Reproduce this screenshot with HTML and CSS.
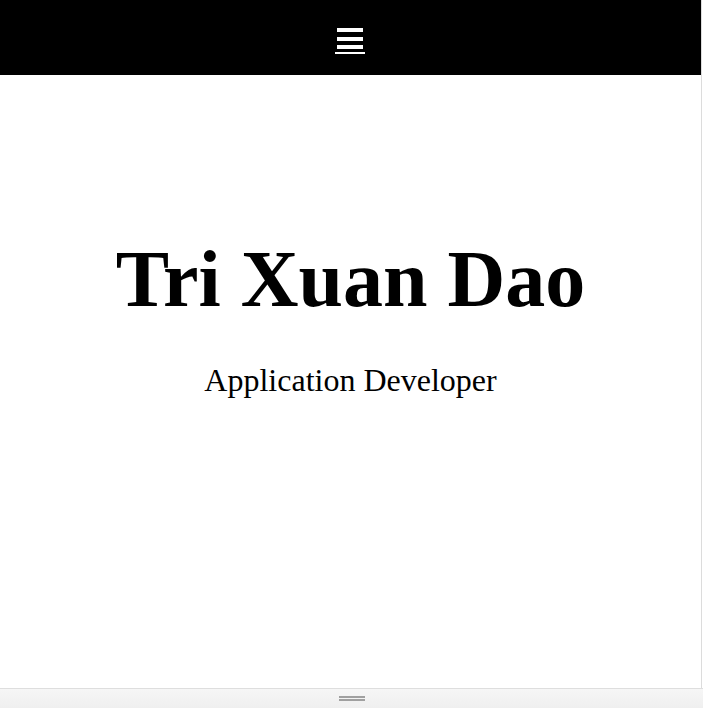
FILE: index.html
```html
<!DOCTYPE html>
<html lang="en">
<head>
<meta charset="utf-8">
<title>Tri Xuan Dao</title>
<link rel="stylesheet" href="styles.css">
</head>
<body>
<div class="frame">
  <header class="topbar">
    <button class="menu" aria-label="Menu">
      <svg width="30" height="28" viewBox="0 0 30 28">
        <rect x="2" y="0" width="26" height="4" fill="#fff"/>
        <rect x="2" y="9" width="26" height="4" fill="#fff"/>
        <rect x="2" y="17" width="26" height="4" fill="#fff"/>
        <rect x="0" y="24" width="30" height="2" fill="#fff"/>
      </svg>
    </button>
  </header>
  <main class="hero">
    <h1 class="name">Tri Xuan Dao</h1>
    <p class="role">Application Developer</p>
  </main>
</div>
<div class="dock">
  <span class="grip"></span>
</div>
</body>
</html>
```
FILE: styles.css
```css
html, body {
  margin: 0;
  padding: 0;
  background: #fff;
}
body {
  width: 703px;
  height: 708px;
  overflow: hidden;
  font-family: "Liberation Serif", "Times New Roman", serif;
  color: #000;
}
.frame {
  width: 701px;
  height: 688px;
  border-right: 1px solid #dcdcdc;
  display: flex;
  flex-direction: column;
}
.topbar {
  height: 75px;
  background: #000;
  display: flex;
  justify-content: center;
  align-items: flex-start;
  padding-top: 28px;
  box-sizing: border-box;
}
.menu {
  background: none;
  border: 0;
  padding: 0;
  margin: 0 0 0 -2px;
  display: block;
  line-height: 0;
}
.hero {
  display: flex;
  flex-direction: column;
  align-items: center;
  padding-top: 164px;
}
.name {
  margin: 0;
  font-size: 80px;
  line-height: 80px;
  font-weight: bold;
}
.role {
  margin: 45px 0 0;
  font-size: 32px;
  line-height: 32px;
}
.dock {
  height: 20px;
  box-sizing: border-box;
  border-top: 1px solid #dedede;
  background: linear-gradient(#f6f6f6, #efefef);
  display: flex;
  justify-content: center;
  padding-top: 7px;
}
.grip {
  width: 26px;
  height: 2px;
  border-top: 2px solid #a0a0a0;
  border-bottom: 2px solid #a0a0a0;
  box-sizing: content-box;
  height: 1px;
}
```
